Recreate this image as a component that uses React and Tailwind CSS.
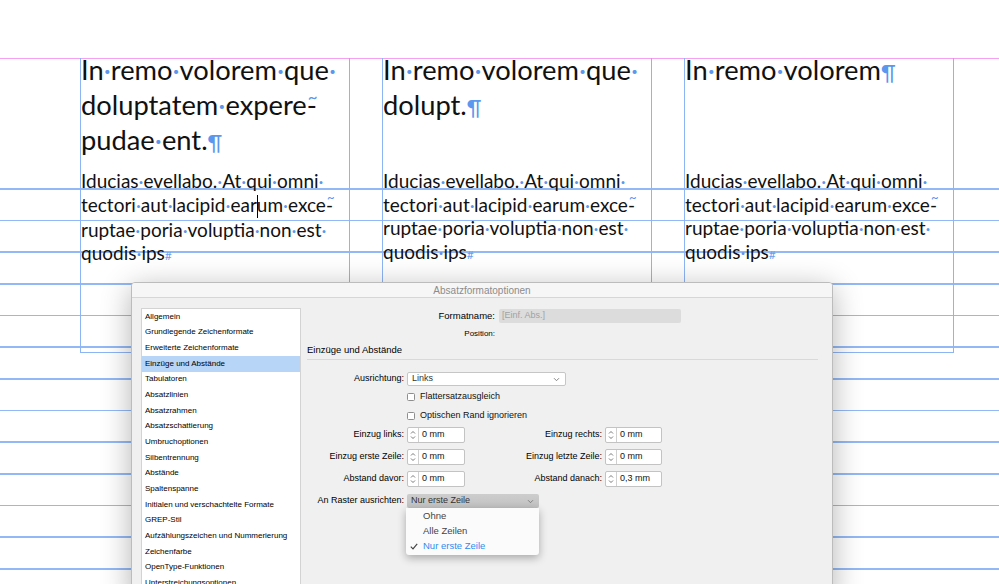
import React from 'react';

const sections = [
  'Allgemein',
  'Grundlegende Zeichenformate',
  'Erweiterte Zeichenformate',
  'Einzüge und Abstände',
  'Tabulatoren',
  'Absatzlinien',
  'Absatzrahmen',
  'Absatzschattierung',
  'Umbruchoptionen',
  'Silbentrennung',
  'Abstände',
  'Spaltenspanne',
  'Initialen und verschachtelte Formate',
  'GREP-Stil',
  'Aufzählungszeichen und Nummerierung',
  'Zeichenfarbe',
  'OpenType-Funktionen',
  'Unterstreichungsoptionen',
  'Durchstreichungsoptionen',
];

// text with blue space markers
const Invis = ({ text }) => {
  const parts = text.split('·');
  return parts.map((p, i) => (
    <React.Fragment key={i}>
      {p}
      {i < parts.length - 1 && <span className="text-[#5b97ee]">·</span>}
    </React.Fragment>
  ));
};

const Hyphen = ({ big }) => (
  <span className="relative">
    -
    <span
      className={
        big
          ? 'absolute left-[1px] top-[-9px] text-[17px] text-[#5b97ee]'
          : 'absolute left-[1px] top-[-7px] text-[13px] text-[#5b97ee]'
      }
    >
      ~
    </span>
  </span>
);

const Pilcrow = () => <span className="text-[21px] text-[#5b97ee]">¶</span>;
const EndMark = () => <span className="text-[12px] text-[#6aa0f0]">#</span>;

const Body = ({ cursor }) => (
  <div className="mt-[12px] text-[19px] leading-[23.5px]">
    <div className="whitespace-nowrap"><Invis text="Iducias·evellabo.·At·qui·omni·" /></div>
    <div className="whitespace-nowrap">
      {cursor ? (
        <>
          <Invis text="tectori·aut·lacipid·ear" />
          <span className="-mr-px inline-block h-[23px] w-px bg-black align-[-6px]" />
          <Invis text="um·exce" />
        </>
      ) : (
        <Invis text="tectori·aut·lacipid·earum·exce" />
      )}
      <Hyphen />
    </div>
    <div className="whitespace-nowrap"><Invis text="ruptae·poria·voluptia·non·est·" /></div>
    <div className="whitespace-nowrap"><Invis text="quodis·ips" /><EndMark /></div>
  </div>
);

const Frame = ({ children, cursor }) => (
  <div className="relative h-[295px] w-[270px] border-x border-b border-[#8db4f5]">
    <div className="-mt-[6px] h-[105px] text-[27.3px] leading-[35px]">{children}</div>
    <Body cursor={cursor} />
  </div>
);

const Stepper = () => (
  <div className="flex h-full w-[11px] items-center justify-center border-r border-[#d0d0d0]">
    <svg width="6" height="10" viewBox="0 0 6 10" fill="none" stroke="#6a6a6a" strokeWidth="0.9">
      <path d="M1 3.5 L3 1.5 L5 3.5" />
      <path d="M1 6.5 L3 8.5 L5 6.5" />
    </svg>
  </div>
);

const Field = ({ value, w }) => (
  <div className={`flex h-[16px] items-center rounded-[2px] border border-[#c3c3c3] bg-white ${w}`}>
    <Stepper />
    <span className="pl-[3px] text-[9px] text-[#111]">{value}</span>
  </div>
);

const Chevron = () => (
  <svg width="7" height="5" viewBox="0 0 7 5" fill="none" stroke="#777" strokeWidth="0.9">
    <path d="M1 1.2 L3.5 3.7 L6 1.2" />
  </svg>
);

const Checkbox = ({ label }) => (
  <div className="flex h-[14px] items-center pl-[100px]">
    <div className="h-[8px] w-[8px] rounded-[1.5px] border border-[#8e8e8e] bg-white" />
    <span className="ml-[5px] text-[9px] text-[#111]">{label}</span>
  </div>
);

const Dialog = () => (
  <div className="absolute left-[131px] top-[282px] flex h-[320px] w-[702px] flex-col overflow-hidden rounded-t-[4px] border border-[#bcbcbc] bg-[#f0f0f0] font-['Liberation_Sans',Arial,sans-serif] shadow-[0_6px_30px_rgba(0,0,0,0.3)]">
    <div className="flex h-[15px] items-center justify-center border-b border-[#d6d6d6] bg-[#f6f6f6] text-[10px] text-[#8c8c8c]">
      Absatzformatoptionen
    </div>
    <div className="flex flex-1">
      <div className="ml-[9px] mt-[10px] w-[160px] border border-[#d3d3d3] bg-white">
        {sections.map((s) => (
          <div
            key={s}
            className={`flex h-[15.67px] items-center whitespace-nowrap px-[3px] text-[8px] text-[#000] ${
              s === 'Einzüge und Abstände' ? 'bg-[#b7d5f6]' : ''
            }`}
          >
            {s}
          </div>
        ))}
      </div>

      <div className="ml-[6px] flex flex-col">
        <div className="mt-[11px] flex h-[14px] items-center">
          <div className="w-[188px] text-right text-[9.5px] text-[#000]">Formatname:</div>
          <div className="ml-[4px] flex h-[14px] w-[182px] items-center rounded-[2px] bg-[#dcdcdc] pl-[3px] text-[9px] text-[#a2a2a2]">
            [Einf. Abs.]
          </div>
        </div>
        <div className="mt-[6px] flex h-[10px] items-center">
          <div className="w-[188px] text-right text-[8px] text-[#000]">Position:</div>
        </div>
        <div className="mt-[5px] flex h-[12px] items-center text-[9.5px] text-[#000]">Einzüge und Abstände</div>
        <div className="mt-[3px] h-px w-[511px] bg-[#d9d9d9]" />

        <div className="mt-[12px] flex h-[14px] items-center">
          <div className="w-[97px] text-right text-[9px] text-[#000]">Ausrichtung:</div>
          <div className="ml-[3px] flex h-[14px] w-[159px] items-center justify-between rounded-[2px] border border-[#c6c6c6] bg-white pl-[4px] pr-[5px] text-[9px] text-[#333]">
            Links
            <Chevron />
          </div>
        </div>
        <div className="mt-[4px]"><Checkbox label="Flattersatzausgleich" /></div>
        <div className="mt-[5px]"><Checkbox label="Optischen Rand ignorieren" /></div>

        {[
          ['Einzug links:', '0 mm', 'Einzug rechts:', '0 mm'],
          ['Einzug erste Zeile:', '0 mm', 'Einzug letzte Zeile:', '0 mm'],
          ['Abstand davor:', '0 mm', 'Abstand danach:', '0,3 mm'],
        ].map(([l1, v1, l2, v2], i) => (
          <div key={l1} className={`flex h-[16px] items-center ${i === 0 ? 'mt-[4px]' : 'mt-[6px]'}`}>
            <div className="w-[97px] whitespace-nowrap text-right text-[9px] text-[#000]">{l1}</div>
            <div className="ml-[3px]"><Field value={v1} w="w-[58px]" /></div>
            <div className="w-[137px] whitespace-nowrap text-right text-[9px] text-[#000]">{l2}</div>
            <div className="ml-[3px]"><Field value={v2} w="w-[57px]" /></div>
          </div>
        ))}

        <div className="mt-[7px] flex h-[14px] items-center">
          <div className="w-[97px] whitespace-nowrap text-right text-[9px] text-[#000]">An Raster ausrichten:</div>
          <div className="relative ml-[3px] flex h-[14px] w-[132px] items-center justify-between rounded-[2px] bg-gradient-to-b from-[#cdcdcd] to-[#c1c1c1] pl-[4px] pr-[5px] text-[9px] text-[#333]">
            Nur erste Zeile
            <Chevron />
            <div className="absolute left-[-1px] top-[14px] w-[133px] rounded-b-[3px] bg-[#fbfbfb] py-[1px] shadow-[0_3px_8px_rgba(0,0,0,0.3)]">
              {['Ohne', 'Alle Zeilen', 'Nur erste Zeile'].map((o) => (
                <div
                  key={o}
                  className={`relative flex h-[15px] items-center pl-[17px] text-[9.5px] ${
                    o === 'Nur erste Zeile' ? 'text-[#2e8cf0]' : 'text-[#444]'
                  }`}
                >
                  {o === 'Nur erste Zeile' && (
                    <svg className="absolute left-[4px] top-[4px]" width="8" height="7" viewBox="0 0 8 7" fill="none" stroke="#444" strokeWidth="1.2">
                      <path d="M0.8 3.6 L3 5.8 L7.2 0.8" />
                    </svg>
                  )}
                  {o}
                </div>
              ))}
            </div>
          </div>
        </div>
      </div>
    </div>
  </div>
);

export default function App() {
  const gridLines = Array.from({ length: 13 }, (_, i) => 188 + i * 31.67);
  return (
    <div className="relative h-[584px] w-[999px] overflow-hidden bg-white">
      {gridLines.map((y) => (
        <div key={y} className="absolute left-0 right-0 h-[1.5px] bg-[#92b8f5]" style={{ top: y }} />
      ))}
      <div className="absolute left-0 right-0 top-[58px] h-px bg-[#f6a0f3]" />

      <div className="flex gap-[32px] pl-[80px] pt-[58px] font-['Lato',sans-serif] text-[#111]">
        <Frame cursor>
          <div className="whitespace-nowrap"><Invis text="In·remo·volorem·que·" /></div>
          <div className="whitespace-nowrap"><Invis text="doluptatem·expere" /><Hyphen big /></div>
          <div className="whitespace-nowrap"><Invis text="pudae·ent." /><Pilcrow /></div>
        </Frame>
        <Frame>
          <div className="whitespace-nowrap"><Invis text="In·remo·volorem·que·" /></div>
          <div className="whitespace-nowrap"><Invis text="dolupt." /><Pilcrow /></div>
        </Frame>
        <Frame>
          <div className="whitespace-nowrap"><Invis text="In·remo·volorem" /><Pilcrow /></div>
        </Frame>
      </div>

      <Dialog />
    </div>
  );
}
